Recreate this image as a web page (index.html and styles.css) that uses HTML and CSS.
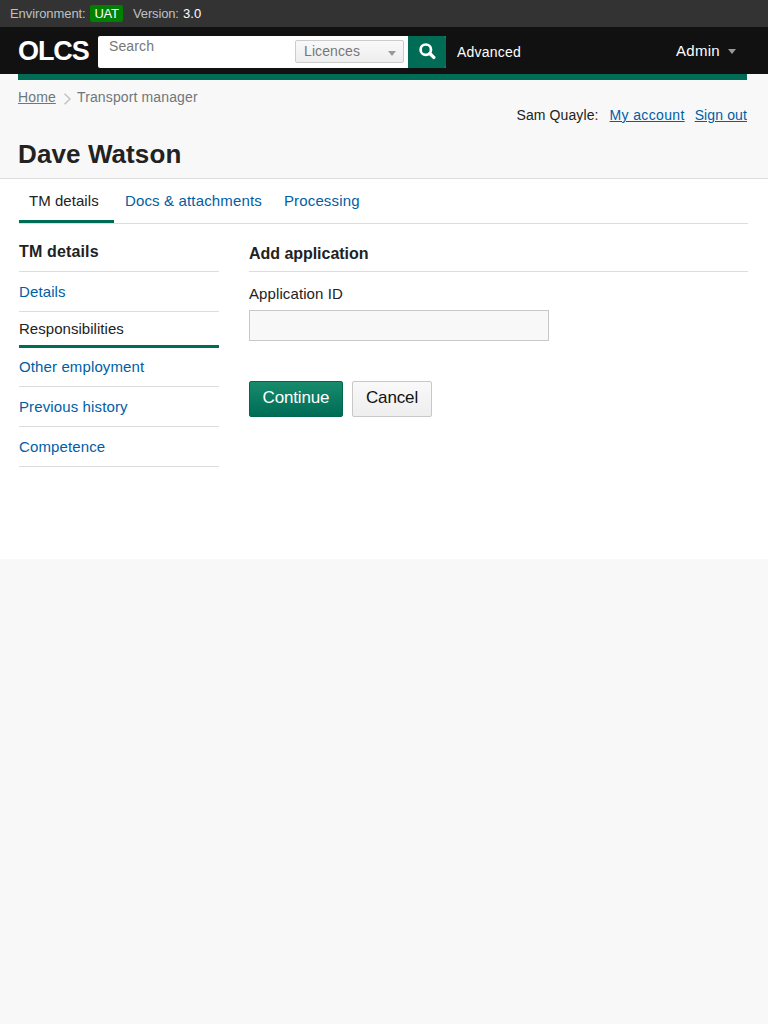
FILE: index.html
```html
<!DOCTYPE html>
<html lang="en">
<head>
<meta charset="utf-8">
<title>OLCS</title>
<link rel="stylesheet" href="styles.css">
</head>
<body>
<div class="environment">
  <span class="env-label">Environment:</span><span class="env-tag">UAT</span><span class="version-label">Version:</span><span class="version">3.0</span>
</div>
<header class="global-header">
  <a class="logo">OLCS</a>
  <form class="search">
    <span class="search-text">Search</span>
    <span class="search-select"><span>Licences</span><i class="caret"></i></span>
    <button class="search-button" type="button" aria-label="Search">
      <svg width="17" height="17" viewBox="0 0 17 17" fill="none" stroke="#fff"><circle cx="6.8" cy="6.7" r="5.2" stroke-width="2.7"/><path d="M10.8 10.5L14.8 14.4" stroke-width="3.4" stroke-linecap="round"/></svg>
    </button>
  </form>
  <a class="advanced">Advanced</a>
  <a class="admin"><span>Admin</span><i class="caret"></i></a>
</header>
<div class="page-header">
  <div class="header-bar"></div>
  <div class="header-top">
    <nav class="breadcrumbs">
      <a class="home">Home</a>
      <svg width="8" height="12" viewBox="0 0 8 12" fill="none" stroke="#bfc1c3" stroke-width="1.4"><path d="M.5 .7L6 6L.5 11.3"/></svg>
      <span class="current">Transport manager</span>
    </nav>
    <div class="account"><span class="user">Sam Quayle:</span><a class="my-account">My account</a><a class="sign-out">Sign out</a></div>
  </div>
  <h1>Dave Watson</h1>
</div>
<div class="page">
  <nav class="tabs">
    <a class="tab active">TM details</a><a class="tab docs">Docs &amp; attachments</a><a class="tab">Processing</a>
  </nav>
  <div class="columns">
    <aside class="side">
      <h2>TM details</h2>
      <a class="item">Details</a>
      <a class="item selected">Responsibilities</a>
      <a class="item after">Other employment</a>
      <a class="item">Previous history</a>
      <a class="item">Competence</a>
    </aside>
    <main class="content">
      <h2>Add application</h2>
      <label for="app-id">Application ID</label>
      <input id="app-id" type="text">
      <div class="actions"><button class="primary" type="button">Continue</button><button class="secondary" type="button">Cancel</button></div>
    </main>
  </div>
</div>
</body>
</html>
```
FILE: styles.css
```css
* { box-sizing: border-box; }
body { margin: 0; background: #f8f8f8; color: #222; font-family: "Liberation Sans", Arial, sans-serif; font-size: 15px; }
h1, h2, form { margin: 0; }
button, input { font-family: inherit; }
span, a { white-space: nowrap; }
svg { display: block; flex: none; }

.environment { height: 27px; padding-left: 10px; display: flex; align-items: center; background: #333; color: #bfc1c3; font-size: 13px; line-height: 17px; }
.env-label { width: 80px; letter-spacing: -.08px; }
.env-tag { width: 33px; height: 17px; border-radius: 2px; background: #008000; color: #fff; text-align: center; letter-spacing: -.3px; }
.version-label { width: 60px; padding-left: 10px; letter-spacing: -.15px; }
.version { color: #fff; letter-spacing: .1px; }

.global-header { height: 47px; padding: 0 32px 0 18px; display: flex; align-items: center; background: #111; color: #fff; }
.logo { width: 80px; font-size: 27px; font-weight: bold; letter-spacing: -1.1px; line-height: 30px; }
.search { width: 348px; height: 32px; margin-top: 3px; display: flex; background: #fff; color: #777; border-radius: 2px; overflow: hidden; font-size: 14px; }
.search-text { width: 197px; padding: 2px 0 0 11px; line-height: 17px; letter-spacing: .12px; }
.search-select { width: 109px; height: 23px; margin: 4px 4px 0 0; padding: 0 7px 0 8px; display: flex; justify-content: space-between; align-items: center; border: 1px solid #ccc; border-radius: 2px; background: linear-gradient(#f9f9f9, #eee); line-height: 21px; letter-spacing: .1px; }
.search-select .caret { margin-top: 3px; }
.caret { width: 0; height: 0; border: solid transparent; border-width: 5px 4.5px 0; border-top-color: #999; }
.search-button { width: 38px; height: 32px; border: 0; padding: 0 0 1px; background: #006c56; display: flex; align-items: center; justify-content: center; }
.advanced { margin: 3px 0 0 11px; font-size: 14px; line-height: 18px; letter-spacing: .2px; }
.admin { margin-left: auto; display: flex; align-items: center; gap: 8px; padding-top: 1px; letter-spacing: .3px; line-height: 18px; }
.admin .caret { margin-top: 1px; }

.page-header { height: 105px; padding: 0 21px 0 18px; border-bottom: 1px solid #dcdddd; }
.header-bar { height: 6px; background: #006c56; }
.header-top { height: 58px; display: flex; justify-content: space-between; font-size: 14px; line-height: 18px; }
.breadcrumbs { height: 34px; display: flex; align-items: center; color: #6f777b; letter-spacing: .13px; }
.home { width: 38px; margin-right: 8px; text-decoration: underline; }
.breadcrumbs svg { margin-top: 3px; }
.current { margin-left: 5px; }
.account { padding-top: 26px; display: flex; letter-spacing: .12px; }
.user { margin-right: 11px; letter-spacing: .1px; }
.my-account, .sign-out { color: #005ea5; text-decoration: underline; }
.my-account { letter-spacing: .35px; }
.sign-out { margin-left: 10px; }
h1 { font-size: 26px; line-height: 32px; letter-spacing: .1px; }

.page { height: 380px; padding: 0 20px 0 19px; background: #fff; }
.tabs { height: 45px; display: flex; border-bottom: 1px solid #dcdddd; color: #005ea5; line-height: 18px; letter-spacing: .15px; }
.tab { padding-top: 13px; }
.active { width: 95px; height: 44px; padding-left: 10px; border-bottom: 3px solid #006c56; color: #222; letter-spacing: .05px; }
.docs { margin: 0 22px 0 11px; }
.columns { display: grid; grid-template-columns: 200px 1fr; column-gap: 30px; }
h2 { height: 48px; border-bottom: 1px solid #dcdddd; font-size: 16px; line-height: 20px; }
.side { display: flex; flex-direction: column; }
.side h2 { padding-top: 18px; letter-spacing: .15px; }
.item { height: 40px; padding-top: 11px; border-bottom: 1px solid #dcdddd; color: #005ea5; line-height: 18px; letter-spacing: .12px; }
.selected { height: 36px; padding-top: 8px; border-bottom: 3px solid #006c56; color: #222; letter-spacing: .04px; }
.after { height: 39px; padding-top: 10px; }
.content h2 { padding-top: 20px; letter-spacing: -.04px; }
.content label { display: block; margin-top: 13px; line-height: 18px; letter-spacing: .1px; }
.content input { display: block; width: 300px; height: 31px; margin-top: 7px; border: 1px solid #c8c8c8; background: #f8f8f8; }
.actions { margin-top: 40px; display: flex; gap: 9px; }
.actions button { height: 36px; padding: 0 0 3px; border-radius: 2px; font-size: 17px; letter-spacing: -.15px; }
.primary { width: 94px; border: 1px solid #00664f; background: linear-gradient(#178b6c, #006c56); color: #fff; }
.secondary { width: 80px; border: 1px solid #c8c8c8; background: linear-gradient(#f9f9f9, #eee); color: #111; }
```
